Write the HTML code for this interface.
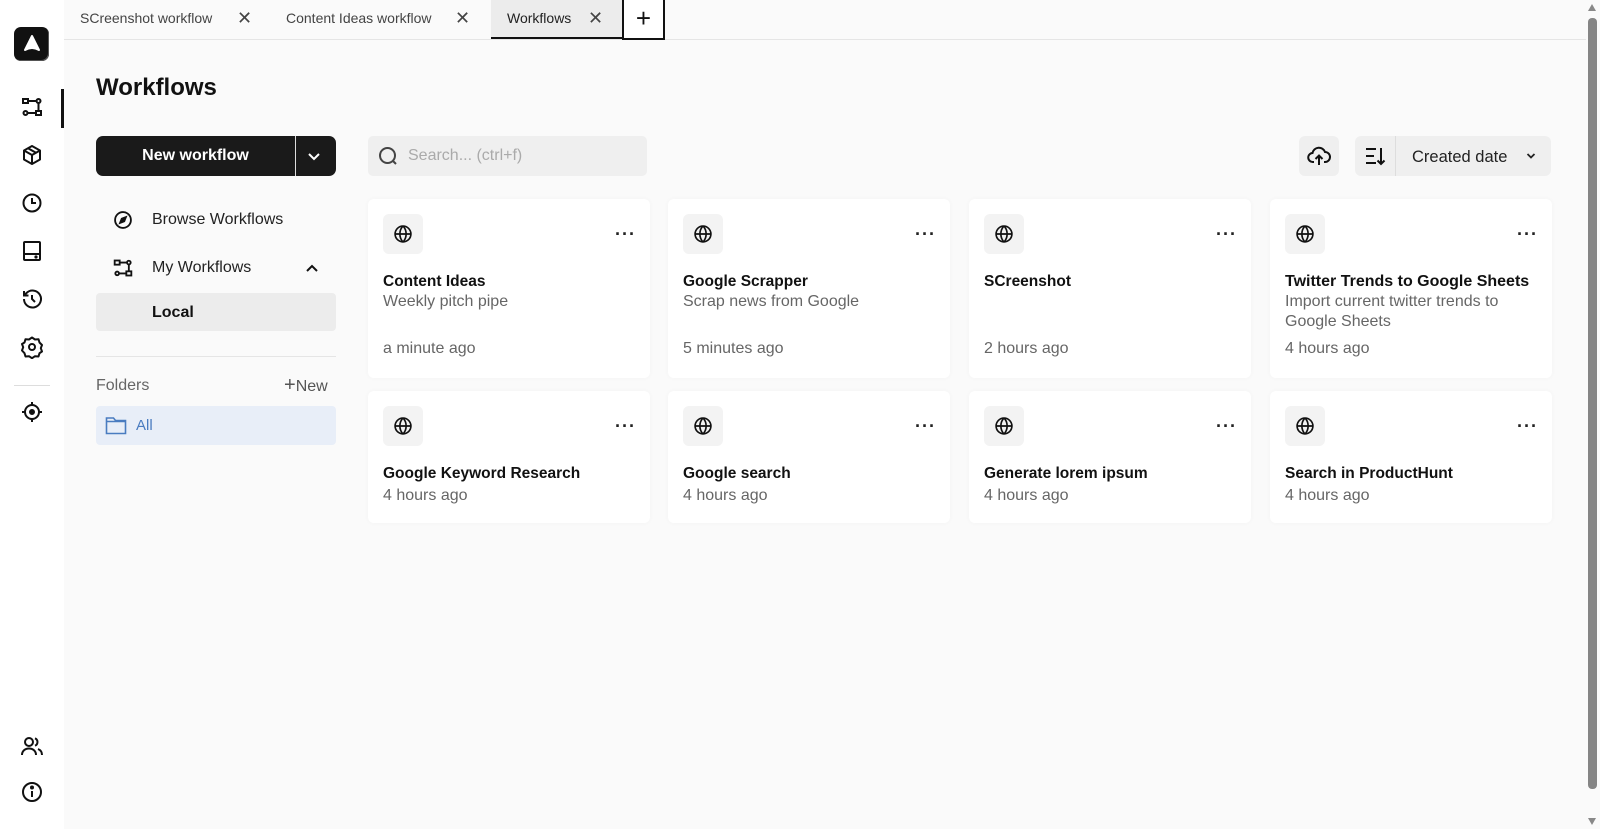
<!DOCTYPE html>
<html><head><meta charset="utf-8"><style>
*{box-sizing:border-box;margin:0;padding:0}
body{width:1600px;height:829px;overflow:hidden;background:#fafafa;font-family:"Liberation Sans",sans-serif;color:#111;position:relative}
.a{position:absolute}
.side{left:0;top:0;width:64px;height:829px;background:#fff}
.ic{position:absolute;left:20px;width:24px;height:24px}
svg{display:block}
.tabbar{left:64px;top:0;width:1522px;height:40px;border-bottom:1px solid #e5e5e5;background:#fafafa}
.tab{position:absolute;top:0;height:39px;line-height:37px;font-size:14px;color:#444}
.card{position:absolute;width:282px;background:#fff;border-radius:6px;box-shadow:0 0 6px rgba(0,0,0,.03)}
.gl{position:absolute;left:15px;top:15px;width:40px;height:40px;background:#f3f3f3;border-radius:6px}
.gl svg{margin:10px}
.dots{position:absolute;right:14px;top:30px;font-size:18px;letter-spacing:1px;line-height:10px;color:#222;font-weight:bold}
.t{position:absolute;left:15px;font-size:15.5px;font-weight:bold;color:#111;white-space:nowrap}
.s{position:absolute;left:15px;font-size:16px;color:#666;line-height:20px}
.nav{position:absolute;left:96px;font-size:16px;color:#222}
</style></head><body>
<div class="a side">
 <div class="a" style="left:14px;top:27px;width:35px;height:34px;background:#111;border-radius:7px;box-shadow:-1px -1px 0 #555 inset"></div>
 <svg class="a" style="left:23px;top:34px" width="18" height="19" viewBox="0 0 18 19"><path d="M9 2 L16 16 Q9 12 2 16 Z" fill="#fff" stroke="#fff" stroke-width="2" stroke-linejoin="round"/></svg>
 <div class="a" style="left:61px;top:89px;width:3px;height:39px;background:#111"></div>
 <svg class="ic" style="top:95px" viewBox="0 0 24 24" fill="none" stroke="#111" stroke-width="2"><rect x="3" y="4" width="5" height="4"/><rect x="16" y="16" width="5" height="4"/><circle cx="18.5" cy="6" r="2"/><circle cx="5.5" cy="18" r="2"/><path d="M8 6h8M18.5 8v8M7.5 18h8.5"/></svg>
 <svg class="ic" style="top:143px" viewBox="0 0 24 24" fill="none" stroke="#111" stroke-width="2" stroke-linejoin="round"><path d="M12 3l8 4.5v9L12 21l-8-4.5v-9z"/><path d="M4 7.5l8 4.5 8-4.5M12 12v9M8 5.2l8 4.6"/></svg>
 <svg class="ic" style="top:191px" viewBox="0 0 24 24" fill="none" stroke="#111" stroke-width="2"><circle cx="12" cy="12" r="8.5"/><path d="M12 7v5h4"/></svg>
 <svg class="ic" style="top:239px" viewBox="0 0 24 24" fill="none" stroke="#111" stroke-width="2"><rect x="4" y="3" width="16" height="18" rx="1"/><path d="M4 15h16"/><circle cx="16" cy="18" r=".6" fill="#111"/></svg>
 <svg class="ic" style="top:287px" viewBox="0 0 24 24" fill="none" stroke="#111" stroke-width="2"><path d="M4 12a8.5 8.5 0 1 0 2.5-6L4 8.5"/><path d="M4 4v4.5h4.5M12 8v4l3 3"/></svg>
 <svg class="ic" style="top:335px" viewBox="0 0 24 24" fill="none" stroke="#111" stroke-width="2" stroke-linejoin="round"><path d="M12 2.5l3 2 3.5-.3 1 3.3 2.5 2.5-1.2 3.2 1.2 3.3-2.5 1.7-1 3.3-3.5-.3-3 2-3-2-3.5.3-1-3.3L2 15.5l1.2-3.3L2 9l2.5-1.5 1-3.3 3.5.3z"/><circle cx="12" cy="12" r="3"/></svg>
 <div class="a" style="left:14px;top:385px;width:36px;height:1px;background:#ddd"></div>
 <svg class="ic" style="top:400px" viewBox="0 0 24 24" fill="none" stroke="#111" stroke-width="2"><circle cx="12" cy="12" r="7"/><circle cx="12" cy="12" r="2" fill="#111"/><path d="M12 2v3M12 19v3M2 12h3M19 12h3"/></svg>
 <svg class="ic" style="top:734px" viewBox="0 0 24 24" fill="none" stroke="#111" stroke-width="2"><circle cx="9" cy="8" r="4"/><path d="M2 21c0-4 3-6.5 7-6.5s7 2.5 7 6.5"/><path d="M15 4.3a4 4 0 0 1 0 7.4M18 15c2.5 1 4 3 4 6"/></svg>
 <svg class="ic" style="top:780px" viewBox="0 0 24 24" fill="none" stroke="#111" stroke-width="2"><circle cx="12" cy="12" r="9"/><path d="M12 11v6"/><circle cx="12" cy="7.5" r="1" fill="#111"/></svg>
</div>

<div class="a tabbar">
 <div class="tab" style="left:16px">SCreenshot workflow</div>
 <div class="tab" style="left:173px;font-size:18px">✕</div>
 <div class="tab" style="left:222px">Content Ideas workflow</div>
 <div class="tab" style="left:391px;font-size:18px">✕</div>
 <div class="tab" style="left:427px;width:131px;background:#ececec;border-bottom:2px solid #111;padding-left:16px;color:#222">Workflows<span style="position:absolute;left:97px;font-size:18px;color:#444">✕</span></div>
 <div class="tab" style="left:558px;width:43px;height:40px;border:2px solid #111;border-top:none;text-align:center;font-size:26px;line-height:36px;color:#111;background:#fff">+</div>
</div>
<div class="a" style="left:1586px;top:0;width:14px;height:829px;background:#fafafa"></div>
<div class="a" style="left:1588px;top:18px;width:9px;height:771px;background:#858585;border-radius:4px"></div>
<div class="a" style="left:1588px;top:4px;width:0;height:0;border-left:4.5px solid transparent;border-right:4.5px solid transparent;border-bottom:7px solid #888"></div>
<div class="a" style="left:1588px;top:818px;width:0;height:0;border-left:4.5px solid transparent;border-right:4.5px solid transparent;border-top:7px solid #888"></div>

<div class="a" style="left:96px;top:74px;font-size:24px;font-weight:bold">Workflows</div>
<div class="a" style="left:96px;top:136px;width:240px;height:40px;background:#1a1a1a;border-radius:7px;color:#fff">
 <div class="a" style="left:0;width:199px;text-align:center;line-height:40px;font-size:16px;font-weight:bold">New workflow</div>
 <div class="a" style="left:199px;top:0;width:1px;height:40px;background:#ddd"></div>
 <svg class="a" style="left:211px;top:13px" width="14" height="14" viewBox="0 0 14 14" fill="none" stroke="#fff" stroke-width="2"><path d="M2 5l5 5 5-5"/></svg>
</div>
<svg class="a" style="left:113px;top:210px" width="20" height="20" viewBox="0 0 24 24" fill="none" stroke="#111" stroke-width="2.2"><circle cx="12" cy="12" r="9.5"/><path d="M15.5 8.5l-2 5-5 2 2-5z" fill="#111"/></svg>
<div class="nav" style="left:152px;top:211px">Browse Workflows</div>
<svg class="a" style="left:113px;top:258px" width="20" height="20" viewBox="0 0 24 24" fill="none" stroke="#111" stroke-width="2.2"><rect x="2" y="3" width="6" height="5"/><rect x="16" y="16" width="6" height="5"/><circle cx="19" cy="5.5" r="2.2"/><circle cx="5" cy="18.5" r="2.2"/><path d="M8 5.5h9M19 8v8M7 18.5h9"/></svg>
<div class="nav" style="left:152px;top:259px">My Workflows</div>
<svg class="a" style="left:305px;top:262px" width="14" height="12" viewBox="0 0 14 12" fill="none" stroke="#111" stroke-width="2"><path d="M2 9l5-5 5 5"/></svg>
<div class="a" style="left:96px;top:293px;width:240px;height:38px;background:#ececec;border-radius:4px"></div>
<div class="nav" style="left:152px;top:304px;font-weight:bold;color:#111">Local</div>
<div class="a" style="left:96px;top:356px;width:240px;height:1px;background:#e5e5e5"></div>
<div class="nav" style="top:377px;color:#666">Folders</div>
<div class="nav" style="left:284px;top:377px;color:#555"><span style="font-size:20px;line-height:16px">+</span>New</div>
<div class="a" style="left:96px;top:406px;width:240px;height:39px;background:#e8eef8;border-radius:4px"></div>
<svg class="a" style="left:105px;top:416px" width="22" height="19" viewBox="0 0 22 19" fill="none" stroke="#4a7cc0" stroke-width="1.6"><path d="M1.5 2h7l2 2.5h10v13h-19z"/><path d="M1.5 5.5h19"/></svg>
<div class="nav" style="left:136px;top:417px;color:#4a7cc0;font-size:15px">All</div>

<div class="a" style="left:368px;top:136px;width:279px;height:40px;background:#efefef;border-radius:5px"></div>
<svg class="a" style="left:378px;top:146px" width="22" height="22" viewBox="0 0 22 22" fill="none" stroke="#444" stroke-width="2"><circle cx="9.5" cy="9.5" r="7.5"/><path d="M15 15l3 3"/></svg>
<div class="a" style="left:408px;top:147px;font-size:16px;color:#aaa">Search... (ctrl+f)</div>

<div class="a" style="left:1299px;top:136px;width:40px;height:40px;background:#efefef;border-radius:6px"></div>
<svg class="a" style="left:1307px;top:144px" width="24" height="24" viewBox="0 0 24 24" fill="none" stroke="#111" stroke-width="2"><path d="M7 18H6a4.5 4.5 0 0 1-.5-9A6.5 6.5 0 0 1 18 8a4.5 4.5 0 0 1 0 10h-1"/><path d="M12 21v-9M8.5 15l3.5-3.5 3.5 3.5"/></svg>
<div class="a" style="left:1355px;top:136px;width:196px;height:40px;background:#efefef;border-radius:6px"></div>
<div class="a" style="left:1395px;top:136px;width:1px;height:40px;background:#ddd"></div>
<svg class="a" style="left:1363px;top:144px" width="24" height="24" viewBox="0 0 24 24" fill="none" stroke="#111" stroke-width="2"><path d="M3 5h10M3 12h8M3 19h10M18 4v16M14.5 16.5L18 20l3.5-3.5"/></svg>
<div class="a" style="left:1412px;top:148px;font-size:16.5px;color:#222">Created date</div>
<svg class="a" style="left:1526px;top:152px" width="10" height="8" viewBox="0 0 10 8" fill="none" stroke="#222" stroke-width="1.8"><path d="M1.5 2l3.5 3.5L8.5 2"/></svg>

<div class="card" style="left:368px;top:199px;height:179px"><div class="gl"><svg width="20" height="20" viewBox="0 0 24 24" fill="none" stroke="#111" stroke-width="2"><circle cx="12" cy="12" r="9.5"/><path d="M2.5 12h19M12 2.5c-5 5-5 14 0 19M12 2.5c5 5 5 14 0 19"/></svg></div><div class="dots">···</div><div class="t" style="top:74px">Content Ideas</div><div class="s" style="top:93px">Weekly pitch pipe</div><div class="s" style="top:140px">a minute ago</div></div>
<div class="card" style="left:668px;top:199px;height:179px"><div class="gl"><svg width="20" height="20" viewBox="0 0 24 24" fill="none" stroke="#111" stroke-width="2"><circle cx="12" cy="12" r="9.5"/><path d="M2.5 12h19M12 2.5c-5 5-5 14 0 19M12 2.5c5 5 5 14 0 19"/></svg></div><div class="dots">···</div><div class="t" style="top:74px">Google Scrapper</div><div class="s" style="top:93px">Scrap news from Google</div><div class="s" style="top:140px">5 minutes ago</div></div>
<div class="card" style="left:969px;top:199px;height:179px"><div class="gl"><svg width="20" height="20" viewBox="0 0 24 24" fill="none" stroke="#111" stroke-width="2"><circle cx="12" cy="12" r="9.5"/><path d="M2.5 12h19M12 2.5c-5 5-5 14 0 19M12 2.5c5 5 5 14 0 19"/></svg></div><div class="dots">···</div><div class="t" style="top:74px">SCreenshot</div><div class="s" style="top:140px">2 hours ago</div></div>
<div class="card" style="left:1270px;top:199px;height:179px"><div class="gl"><svg width="20" height="20" viewBox="0 0 24 24" fill="none" stroke="#111" stroke-width="2"><circle cx="12" cy="12" r="9.5"/><path d="M2.5 12h19M12 2.5c-5 5-5 14 0 19M12 2.5c5 5 5 14 0 19"/></svg></div><div class="dots">···</div><div class="t" style="top:74px;font-size:16px">Twitter Trends to Google Sheets</div><div class="s" style="top:93px;width:262px">Import current twitter trends to Google Sheets</div><div class="s" style="top:140px">4 hours ago</div></div>

<div class="card" style="left:368px;top:391px;height:132px"><div class="gl"><svg width="20" height="20" viewBox="0 0 24 24" fill="none" stroke="#111" stroke-width="2"><circle cx="12" cy="12" r="9.5"/><path d="M2.5 12h19M12 2.5c-5 5-5 14 0 19M12 2.5c5 5 5 14 0 19"/></svg></div><div class="dots">···</div><div class="t" style="top:74px">Google Keyword Research</div><div class="s" style="top:95px">4 hours ago</div></div>
<div class="card" style="left:668px;top:391px;height:132px"><div class="gl"><svg width="20" height="20" viewBox="0 0 24 24" fill="none" stroke="#111" stroke-width="2"><circle cx="12" cy="12" r="9.5"/><path d="M2.5 12h19M12 2.5c-5 5-5 14 0 19M12 2.5c5 5 5 14 0 19"/></svg></div><div class="dots">···</div><div class="t" style="top:74px">Google search</div><div class="s" style="top:95px">4 hours ago</div></div>
<div class="card" style="left:969px;top:391px;height:132px"><div class="gl"><svg width="20" height="20" viewBox="0 0 24 24" fill="none" stroke="#111" stroke-width="2"><circle cx="12" cy="12" r="9.5"/><path d="M2.5 12h19M12 2.5c-5 5-5 14 0 19M12 2.5c5 5 5 14 0 19"/></svg></div><div class="dots">···</div><div class="t" style="top:74px">Generate lorem ipsum</div><div class="s" style="top:95px">4 hours ago</div></div>
<div class="card" style="left:1270px;top:391px;height:132px"><div class="gl"><svg width="20" height="20" viewBox="0 0 24 24" fill="none" stroke="#111" stroke-width="2"><circle cx="12" cy="12" r="9.5"/><path d="M2.5 12h19M12 2.5c-5 5-5 14 0 19M12 2.5c5 5 5 14 0 19"/></svg></div><div class="dots">···</div><div class="t" style="top:74px">Search in ProductHunt</div><div class="s" style="top:95px">4 hours ago</div></div>
</body></html>
